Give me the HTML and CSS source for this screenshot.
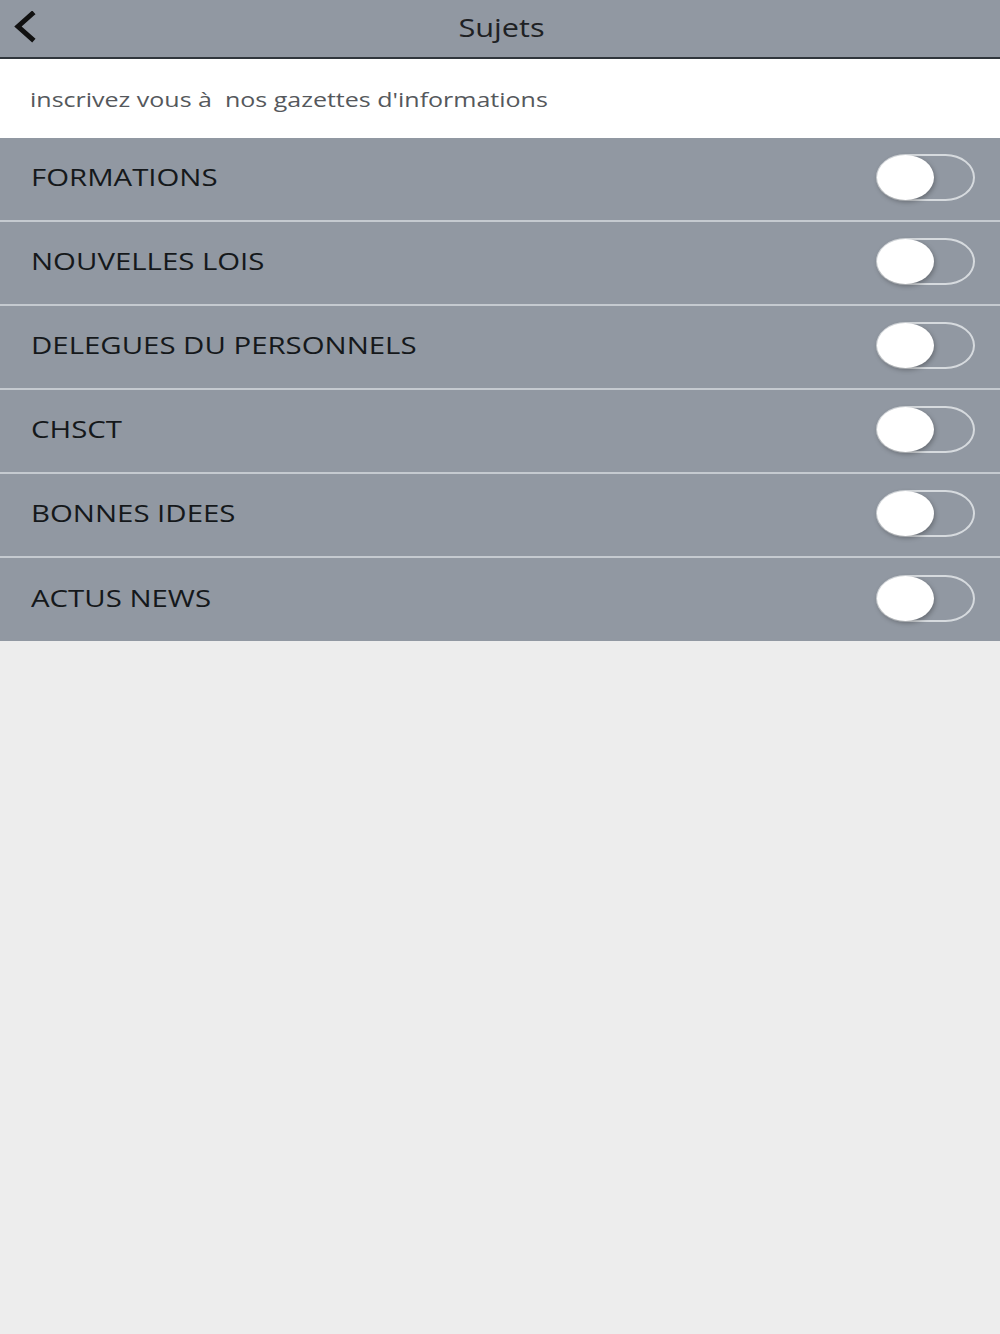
FILE: index.html
```html
<!DOCTYPE html>
<html lang="fr">
<head>
<meta charset="utf-8">
<title>Sujets</title>
<link rel="stylesheet" href="styles.css">
</head>
<body>
<div class="app">
  <header class="topbar">
    <button class="back" aria-label="Retour">
      <svg width="28" height="32" viewBox="0 0 28 32"><path d="M22 3 L8 15.5 L22 28" fill="none" stroke="#111" stroke-width="5" stroke-linecap="square" stroke-linejoin="miter"/></svg>
    </button>
    <h1 class="title"><span class="stretch">Sujets</span></h1>
  </header>
  <div class="intro"><span class="stretch">inscrivez vous à&nbsp; nos gazettes d'informations</span></div>
  <ul class="list">
    <li class="row"><span class="label">FORMATIONS</span><span class="toggle"><span class="knob"></span></span></li>
    <li class="row"><span class="label">NOUVELLES LOIS</span><span class="toggle"><span class="knob"></span></span></li>
    <li class="row"><span class="label">DELEGUES DU PERSONNELS</span><span class="toggle"><span class="knob"></span></span></li>
    <li class="row"><span class="label">CHSCT</span><span class="toggle"><span class="knob"></span></span></li>
    <li class="row"><span class="label">BONNES IDEES</span><span class="toggle"><span class="knob"></span></span></li>
    <li class="row"><span class="label">ACTUS NEWS</span><span class="toggle"><span class="knob"></span></span></li>
  </ul>
</div>
</body>
</html>
```
FILE: styles.css
```css
html, body {
  margin: 0;
  padding: 0;
  height: 100%;
}
body {
  background: #ededed;
  font-family: "Open Sans", "Noto Sans", sans-serif;
}
.app {
  display: flex;
  flex-direction: column;
}
.stretch {
  display: inline-block;
  transform-origin: left center;
  transform: scaleX(1.25);
}
.topbar {
  height: 57px;
  background: #9198a2;
  border-bottom: 2px solid #30363c;
  display: flex;
  align-items: center;
  position: relative;
}
.back {
  background: none;
  border: 0;
  padding: 0;
  margin-left: 10px;
  margin-top: -3px;
  display: flex;
  align-items: center;
}
.title {
  position: absolute;
  left: 0;
  right: 0;
  top: 0;
  margin: 0;
  text-align: center;
  line-height: 54px;
  font-size: 26px;
  font-weight: 400;
  color: #1e2124;
  pointer-events: none;
}
.title .stretch {
  transform-origin: center center;
  transform: scaleX(1.18);
  margin-left: 4px;
}
.intro {
  height: 79px;
  background: #ffffff;
  display: flex;
  align-items: center;
  padding-left: 30px;
  font-size: 20px;
  color: #55585c;
  padding-top: 1px;
  box-sizing: border-box;
}
.list {
  list-style: none;
  margin: 0;
  padding: 0;
}
.row {
  height: 82px;
  background: #9198a2;
  display: flex;
  align-items: center;
  justify-content: space-between;
  padding: 0 25px 0 31px;
  border-bottom: 2px solid #c5cad0;
}
.row:last-child {
  border-bottom: 0;
  height: 83px;
}
.label {
  display: inline-block;
  transform-origin: left center;
  transform: scaleX(1.25);
  font-size: 23.5px;
  color: #15181b;
  margin-top: -4px;
}
.toggle {
  width: 99px;
  height: 47px;
  box-sizing: border-box;
  border: 2px solid #d6dade;
  border-radius: 30px / 24px;
  position: relative;
  display: block;
  margin-top: -3px;
}
.knob {
  position: absolute;
  left: -1px;
  top: -1px;
  width: 57px;
  height: 45px;
  border-radius: 50%;
  background: #ffffff;
  box-shadow: 1px 2px 5px rgba(0,0,0,0.3);
}
```
